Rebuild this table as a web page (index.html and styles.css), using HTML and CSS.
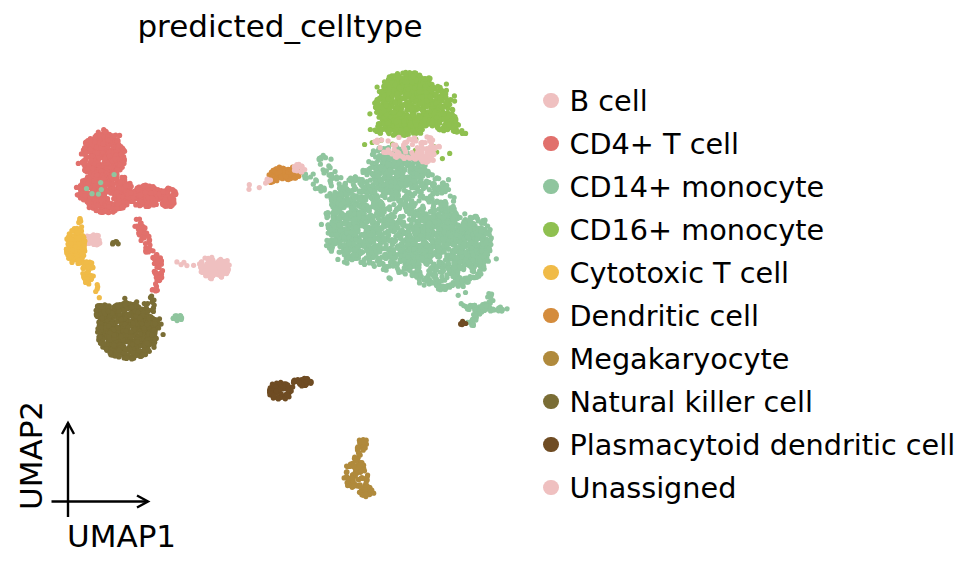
FILE: index.html
```html
<!DOCTYPE html>
<html>
<head>
<meta charset="utf-8">
<link rel="stylesheet" href="styles.css">
</head>
<body>
<div class="page">
  <div class="plot">
    <div class="title">predicted_celltype</div>
    <svg class="canvas" width="535" height="508" viewBox="0 60 535 508">
      <g id="points"></g>
      <g class="axes">
        <line x1="51.5" y1="501.5" x2="148" y2="501.5"/>
        <polyline points="137,495.5 148,501.5 137,507.5"/>
        <line x1="68" y1="517" x2="68" y2="423"/>
        <polyline points="62,434 68,423 74,434"/>
      </g>
      <text class="axis-label" x="67" y="547">UMAP1</text>
      <text class="axis-label" transform="translate(42,510) rotate(-90)">UMAP2</text>
    </svg>
  </div>
  <ul class="legend">
    <li><span class="dot c-bcell"></span>B cell</li>
    <li><span class="dot c-cd4"></span>CD4+ T cell</li>
    <li><span class="dot c-cd14"></span>CD14+ monocyte</li>
    <li><span class="dot c-cd16"></span>CD16+ monocyte</li>
    <li><span class="dot c-cyto"></span>Cytotoxic T cell</li>
    <li><span class="dot c-dc"></span>Dendritic cell</li>
    <li><span class="dot c-mega"></span>Megakaryocyte</li>
    <li><span class="dot c-nk"></span>Natural killer cell</li>
    <li><span class="dot c-pdc"></span>Plasmacytoid dendritic cell</li>
    <li><span class="dot c-un"></span>Unassigned</li>
  </ul>
</div>
<script src="script.js"></script>
</body>
</html>
```

FILE: styles.css
```css
html, body {
  margin: 0;
  padding: 0;
  background: #ffffff;
}
body {
  font-family: "DejaVu Sans", "Liberation Sans", sans-serif;
  color: #000;
}
.page {
  display: flex;
  width: 970px;
  height: 568px;
  overflow: hidden;
}
.plot {
  width: 535px;
  display: flex;
  flex-direction: column;
}
.title {
  height: 60px;
  box-sizing: border-box;
  padding-top: 9px;
  padding-left: 25px;
  font-size: 31px;
  line-height: 34px;
  text-align: center;
}
.canvas {
  display: block;
}
.axes line, .axes polyline {
  stroke: #000;
  stroke-width: 2.4;
  fill: none;
}
.axis-label {
  font-family: "DejaVu Sans", sans-serif;
  font-size: 31px;
  fill: #000;
}
.legend {
  list-style: none;
  margin: 0;
  padding: 79px 0 0 8px;
  display: flex;
  flex-direction: column;
  font-size: 28.7px;
}
.legend li {
  height: 43px;
  display: flex;
  align-items: center;
  white-space: nowrap;
}
.dot {
  width: 15.5px;
  height: 15.5px;
  border-radius: 50%;
  margin-right: 11px;
  flex: none;
}
.c-bcell { background: #efc0c0; }
.c-cd4 { background: #e1706c; }
.c-cd14 { background: #8fc59e; }
.c-cd16 { background: #8fc050; }
.c-cyto { background: #f0bb48; }
.c-dc { background: #d48c3d; }
.c-mega { background: #b08a3c; }
.c-nk { background: #7a6d35; }
.c-pdc { background: #6f4c23; }
.c-un { background: #efc0c0; }
```

FILE: script.js
```js
(function () {
  var seed = 4242;
  function rnd() {
    seed |= 0; seed = seed + 0x6D2B79F5 | 0;
    var t = Math.imul(seed ^ seed >>> 15, 1 | seed);
    t = t + Math.imul(t ^ t >>> 7, 61 | t) ^ t;
    return ((t ^ t >>> 14) >>> 0) / 4294967296;
  }
  var C = {
    b: '#efc0c0', cd4: '#e1706c', cd14: '#8fc59e', cd16: '#8fc050',
    cyto: '#f0bb48', dc: '#d48c3d', mega: '#b08a3c', nk: '#7a6d35',
    pdc: '#6f4c23', un: '#efc0c0'
  };
  // e: cx, cy, rx, ry, n   l: x1, y1, x2, y2, w, n
  var comps = [
    ['cd14', 'e', 395, 217, 64, 54, 1100],
    ['cd14', 'e', 445, 252, 45, 38, 650],
    ['cd14', 'e', 352, 236, 28, 24, 200],
    ['cd14', 'e', 398, 170, 28, 18, 180],
    ['cd14', 'e', 474, 240, 18, 24, 130],
    ['cd14', 'e', 340, 200, 10, 10, 35],
    ['cd14', 'l', 322, 158, 345, 198, 6, 35],
    ['cd14', 'l', 305, 176, 335, 196, 5, 22],
    ['cd14', 'e', 333, 214, 8, 6, 18],
    ['cd14', 'l', 470, 325, 492, 296, 3, 40],
    ['cd14', 'l', 460, 306, 505, 310, 3, 35],
    ['cd14', 'e', 395, 152, 25, 8, 35],
    ['cd16', 'e', 412, 104, 38, 27, 600],
    ['cd16', 'e', 406, 84, 22, 12, 140],
    ['cd16', 'e', 398, 128, 24, 8, 100],
    ['cd16', 'e', 446, 122, 14, 9, 70],
    ['cd16', 'l', 448, 126, 467, 136, 3, 16],
    ['cd16', 'l', 372, 140, 450, 150, 10, 14],
    ['b', 'e', 410, 148, 30, 11, 55],
    ['b', 'e', 425, 155, 12, 9, 40],
    ['b', 'l', 372, 142, 442, 140, 4, 18],
    ['dc', 'e', 286, 173, 15, 7, 85],
    ['dc', 'e', 273, 180, 5, 3, 15],
    ['b', 'e', 299, 168, 6, 6, 14],
    ['b', 'l', 248, 188, 270, 181, 3, 10],
    ['cd4', 'e', 103, 157, 22, 24, 450],
    ['cd4', 'e', 103, 137, 8, 7, 40],
    ['cd4', 'e', 106, 192, 27, 21, 400],
    ['cd4', 'e', 145, 196, 18, 11, 150],
    ['cd4', 'e', 168, 197, 9, 10, 60],
    ['cd4', 'l', 137, 218, 152, 256, 4, 45],
    ['cd4', 'e', 158, 268, 5, 14, 45],
    ['cd4', 'l', 157, 280, 155, 290, 3, 6],
    ['cd14', 'e', 100, 180, 15, 20, 6],
    ['b', 'e', 94, 240, 7, 6, 30],
    ['cyto', 'e', 76, 246, 10, 18, 150],
    ['cyto', 'e', 88, 272, 6, 12, 45],
    ['cyto', 'l', 78, 218, 82, 228, 2, 6],
    ['cyto', 'l', 96, 285, 100, 300, 2, 5],
    ['b', 'e', 214, 268, 15, 11, 140],
    ['b', 'l', 178, 262, 200, 266, 2, 7],
    ['nk', 'e', 128, 331, 31, 28, 700],
    ['nk', 'e', 104, 312, 10, 8, 60],
    ['nk', 'l', 152, 296, 154, 312, 2, 8],
    ['nk', 'e', 114, 244, 4, 3, 5],
    ['cd14', 'e', 178, 318, 5, 3, 15],
    ['pdc', 'e', 280, 391, 12, 9, 90],
    ['pdc', 'e', 302, 382, 10, 4, 35],
    ['pdc', 'e', 463, 323, 3, 2, 6],
    ['mega', 'e', 356, 476, 12, 19, 85],
    ['mega', 'e', 362, 447, 5, 9, 22],
    ['mega', 'e', 368, 492, 9, 6, 32]
  ];
  var g = document.getElementById('points');
  var ns = 'http://www.w3.org/2000/svg';
  var frag = document.createDocumentFragment();
  function add(x, y, col) {
    var el = document.createElementNS(ns, 'circle');
    el.setAttribute('cx', x.toFixed(1));
    el.setAttribute('cy', y.toFixed(1));
    el.setAttribute('r', '2.6');
    el.setAttribute('fill', col);
    frag.appendChild(el);
  }
  comps.forEach(function (c) {
    var col = C[c[0]];
    var i, x, y;
    if (c[1] === 'e') {
      for (i = 0; i < c[6]; i++) {
        var a = rnd() * Math.PI * 2;
        var r = Math.sqrt(rnd());
        if (rnd() < 0.06) r *= 1.18;
        x = c[2] + Math.cos(a) * r * c[4];
        y = c[3] + Math.sin(a) * r * c[5];
        add(x, y, col);
      }
    } else {
      for (i = 0; i < c[7]; i++) {
        var t = rnd();
        x = c[2] + (c[4] - c[2]) * t + (rnd() - 0.5) * c[6] * 2;
        y = c[3] + (c[5] - c[3]) * t + (rnd() - 0.5) * c[6] * 2;
        add(x, y, col);
      }
    }
  });
  g.appendChild(frag);
})();
```
